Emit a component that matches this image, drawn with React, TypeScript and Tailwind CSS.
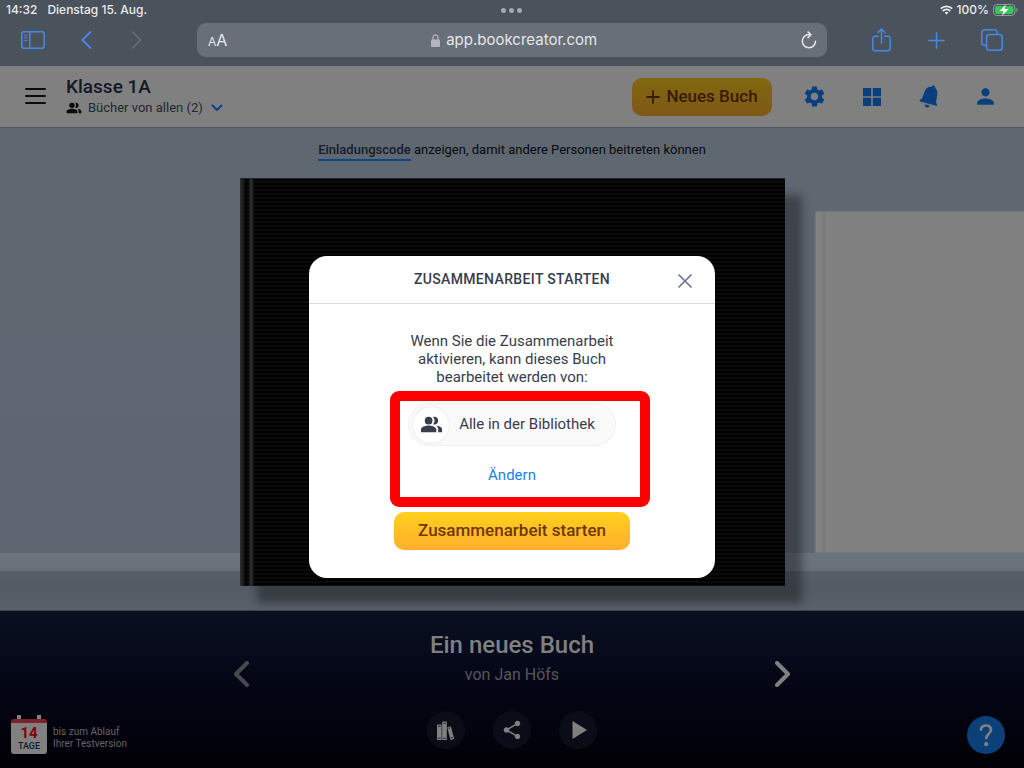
import type { ReactNode } from "react";
import { MdPeopleAlt, MdPerson, MdSettings, MdShare } from "react-icons/md";

function StatusBar() {
  return (
    <div className="grid h-5 grid-cols-3 items-center px-1.5 text-xs leading-4 font-medium text-[#e8eaec]">
      <div className="flex gap-2.5 whitespace-nowrap">
        <span>14:32</span>
        <span>Dienstag 15. Aug.</span>
      </div>
      <div className="flex justify-center gap-[3px]">
        <i className="size-[5px] rounded-full bg-[#a4a9ae]" />
        <i className="size-[5px] rounded-full bg-[#a4a9ae]" />
        <i className="size-[5px] rounded-full bg-[#a4a9ae]" />
      </div>
      <div className="flex items-center justify-end gap-1">
        <svg width="13" height="10" viewBox="0 0 13 10" fill="none" stroke="currentColor" strokeWidth="1.8">
          <path d="M.8 3.7a8.1 8.1 0 0 1 11.4 0M2.8 6a5.2 5.2 0 0 1 7.4 0" />
          <path d="M6.5 9.6 4.6 7.7a2.7 2.7 0 0 1 3.8 0z" fill="currentColor" stroke="none" />
        </svg>
        <span>100%</span>
        <svg width="25" height="12" viewBox="0 0 25 12">
          <rect x=".5" y=".5" width="21.5" height="11" rx="3.4" fill="none" stroke="#949a9f" />
          <rect x="2" y="2" width="18.5" height="8" rx="2" fill="#35c759" />
          <path d="M23.4 4v4c.8-.3 1.2-1.1 1.2-2s-.4-1.7-1.2-2z" fill="#949a9f" />
          <path d="M12.8.4 6.4 6.9h3.9L9.2 11.7 15.5 5h-3.8z" fill="#fff" />
        </svg>
      </div>
    </div>
  );
}

function BrowserBar() {
  return (
    <div className="grid h-[46px] grid-cols-[197px_1fr_197px] items-start pt-[3px] text-[#4689e8]">
      <div className="flex h-[34px] items-center pl-[21px]">
        <button aria-label="Seitenleiste">
          <svg width="24" height="18" viewBox="0 0 24 18" fill="none" stroke="currentColor" strokeWidth="1.5">
            <rect x=".8" y=".8" width="22.4" height="16.4" rx="2.2" />
            <path d="M8.8.8v16.4" />
            <path d="M3 4.2h3.5M3 6.8h3.5M3 9.4h3.5" strokeWidth="1" />
          </svg>
        </button>
        <button aria-label="Zurück" className="ml-9">
          <svg width="11" height="18" viewBox="0 0 11 18" fill="none" stroke="currentColor" strokeWidth="1.8" strokeLinecap="round" strokeLinejoin="round">
            <path d="M9.5 1 1.5 9l8 8" />
          </svg>
        </button>
        <button aria-label="Vorwärts" className="ml-[39px] text-[#6a717a]">
          <svg width="11" height="18" viewBox="0 0 11 18" fill="none" stroke="currentColor" strokeWidth="1.5" strokeLinecap="round" strokeLinejoin="round">
            <path d="m1.5 1 8 8-8 8" />
          </svg>
        </button>
      </div>
      <div className="flex h-[34px] items-center justify-between rounded-[9px] bg-[#686f79] pr-2.5 pl-[11px] text-[#e4e6e8]">
        <button className="flex items-baseline">
          <span className="text-xs">A</span>
          <span className="text-base">A</span>
        </button>
        <div className="flex items-center gap-1.5 text-[15px]">
          <svg width="9" height="13" viewBox="0 0 9 13" className="text-[#b4b5c2]">
            <path d="M2 6V3.6a2.5 2.7 0 0 1 5 0V6" fill="none" stroke="currentColor" strokeWidth="1.2" />
            <rect y="5.5" width="9" height="7.5" rx="1.3" fill="currentColor" />
          </svg>
          <span>app.bookcreator.com</span>
        </div>
        <button aria-label="Neu laden">
          <svg width="16" height="18" viewBox="0 0 16 18" fill="none" stroke="currentColor" strokeWidth="1.5" strokeLinecap="round" strokeLinejoin="round">
            <path d="M14.5 10.2a6.6 6.6 0 1 1-6.6-6.6h1.6" />
            <path d="M7 .9l2.9 2.8L7 6.6" />
          </svg>
        </button>
      </div>
      <div className="flex h-[34px] items-center justify-between pr-[21px] pl-[45px]">
        <button aria-label="Teilen">
          <svg width="19" height="24" viewBox="0 0 19 24" fill="none" stroke="currentColor" strokeWidth="1.5" strokeLinecap="round" strokeLinejoin="round">
            <path d="M6.2 8.3H3a2.2 2.2 0 0 0-2.2 2.2v10A2.2 2.2 0 0 0 3 22.7h13a2.2 2.2 0 0 0 2.2-2.2v-10A2.2 2.2 0 0 0 16 8.3h-3.2" />
            <path d="M9.5 15V1.2M6 4.5 9.5 1 13 4.5" />
          </svg>
        </button>
        <button aria-label="Neuer Tab">
          <svg width="17" height="17" viewBox="0 0 17 17" stroke="currentColor" strokeWidth="1.5" strokeLinecap="round">
            <path d="M8.5.8v15.4M.8 8.5h15.4" />
          </svg>
        </button>
        <button aria-label="Tabs">
          <svg width="22" height="22" viewBox="0 0 22 22" fill="none" stroke="currentColor" strokeWidth="1.5">
            <path d="M5.5 16.2H3.6A2.8 2.8 0 0 1 .8 13.4V3.6A2.8 2.8 0 0 1 3.6.8h9.8a2.8 2.8 0 0 1 2.8 2.8v1.9" />
            <rect x="5.6" y="5.6" width="15.6" height="15.6" rx="2.8" />
          </svg>
        </button>
      </div>
    </div>
  );
}

function NavIcon({ label, children }: { label: string; children: ReactNode }) {
  return (
    <button aria-label={label} className="flex h-10 w-[57px] items-center justify-center">
      {children}
    </button>
  );
}

function Header() {
  return (
    <header className="flex h-[61px] items-center bg-[#808080] pr-2.5 pl-[25px]">
      <button aria-label="Menü" className="flex w-[21px] flex-col gap-[5px] pb-px">
        <i className="h-0.5 rounded-full bg-[#0a0c10]" />
        <i className="h-0.5 rounded-full bg-[#0a0c10]" />
        <i className="h-0.5 rounded-full bg-[#0a0c10]" />
      </button>
      <div className="ml-5">
        <h1 className="text-[19px] leading-[22px] font-medium text-[#141827]">Klasse 1A</h1>
        <button className="flex items-center text-[13px] leading-5 text-[#232733]">
          <MdPeopleAlt className="size-4 text-[#080808]" />
          <span className="ml-1.5">Bücher von allen (2)</span>
          <svg width="12" height="8" viewBox="0 0 12 8" fill="none" stroke="#0a4287" strokeWidth="2" strokeLinecap="round" strokeLinejoin="round" className="ml-2">
            <path d="M1.5 1.5 6 6l4.5-4.5" />
          </svg>
        </button>
      </div>
      <button className="mr-3.5 ml-auto flex h-[38px] w-[140px] items-center justify-center gap-1.5 rounded-[10px] bg-linear-to-b from-[#806810] to-[#805716] text-[17px] font-medium text-[#371c04]">
        <svg width="14" height="14" viewBox="0 0 14 14" stroke="currentColor" strokeWidth="1.8" strokeLinecap="round">
          <path d="M7 1v12M1 7h12" />
        </svg>
        Neues Buch
      </button>
      <nav className="flex text-[#0a3f7e]">
        <NavIcon label="Einstellungen">
          <MdSettings className="size-[25px]" />
        </NavIcon>
        <NavIcon label="Bibliotheken">
          <svg width="18" height="18" viewBox="0 0 18 18" fill="currentColor">
            <path d="M0 0h8.2v8.2H0zM9.8 0H18v8.2H9.8zM0 9.8h8.2V18H0zM9.8 9.8H18V18H9.8z" />
          </svg>
        </NavIcon>
        <NavIcon label="Mitteilungen">
          <svg width="20" height="23" viewBox="0 0 20 23" fill="currentColor">
            <path d="M12.7 1.9c.3-1 1.200-1.500 2.100-1.300 1 .3 1.500 1.200 1.200 2.200 2.100 1.700 2.800 4.300 2.300 7.200l-1.200 6.700c-.1.700 0 1.300.4 1.900l.5.8c.5.800 0 1.500-.8 1.300L1.200 16.400c-.9-.2-1-1.200-.2-1.600l1.100-.6c.6-.3 1-.8 1.200-1.500L5.400 7C6.500 3.500 9.200 1.600 12.700 1.900z" />
            <path d="m5.800 19.300 5 1.300c-.5 1.500-1.700 2.200-3.100 1.900-1.300-.4-2.100-1.700-1.900-3.200z" />
          </svg>
        </NavIcon>
        <NavIcon label="Konto">
          <MdPerson className="size-[25px]" />
        </NavIcon>
      </nav>
    </header>
  );
}

function Shelf() {
  return (
    <main className="flex-1 overflow-hidden border-t border-[#505a69] border-b border-b-[#3c4450] bg-[linear-gradient(to_top,#58606a_0,#535b64_24px,#575f68_39px,#687179_39px,#6b747c_57px,#5e6771_57px,#5f6771_100%)] pb-[23px]">
      <p className="pt-[13px] text-center text-[13px] leading-[18px] text-[#08090b]">
        <a href="#einladung" className="inline-block border-b-2 border-[#0d4687] font-medium text-[#171c2a]">
          Einladungscode
        </a>{" "}
        anzeigen, damit andere Personen beitreten können
      </p>
      <div className="mt-[17px] grid grid-cols-[1fr_545px_1fr] items-center gap-[30px]">
        <div />
        <div className="flex h-[408px] border-t border-[#242424] bg-[repeating-linear-gradient(#010101_0_2px,#0b0b0b_2px_4px)] shadow-[17px_17px_8px_rgba(20,18,22,0.42)]">
          <div className="w-4 bg-[linear-gradient(to_right,#303030_0,#222222_2px,#1a1a1aaa_4px,#00000088_6px,#11111188_9px,#2a2a2a_10px,#2a2a2a_12px,#0a0a0a88_14px,#00000000_16px)]" />
        </div>
        <div className="h-[342px] border border-r-0 border-[#747778] bg-[linear-gradient(to_right,#838383_0,#7f7f7f_6px,#787878_8px,#7c7c7c_9px,#808080_11px)]" />
      </div>
    </main>
  );
}

function RoundButton({ label, children }: { label: string; children: ReactNode }) {
  return (
    <button aria-label={label} className="flex size-[38px] items-center justify-center rounded-full bg-[#0a0d18]">
      {children}
    </button>
  );
}

function TrialBadge() {
  return (
    <div className="flex items-center gap-1.5">
      <div className="w-9">
        <div className="flex h-1 justify-between px-1.5">
          <i className="w-1 bg-[#808080]" />
          <i className="w-1 bg-[#808080]" />
        </div>
        <div className="h-[35px] rounded-[3px] border-t-4 border-[#80202f] bg-[#808080] pt-0.5 text-center">
          <div className="text-[15px] leading-4 font-bold text-[#80000c]">14</div>
          <div className="text-[9px] leading-[10px] font-medium text-[#181c2a]">TAGE</div>
        </div>
      </div>
      <p className="pt-1.5 text-[10px] leading-3 text-[#646568]">
        bis zum Ablauf
        <br />
        Ihrer Testversion
      </p>
    </div>
  );
}

function Footer() {
  return (
    <footer className="bg-linear-to-b from-[#0a1022] to-[#010107] px-[11px] pt-5 pb-3.5 text-[#808080]">
      <div className="flex items-end justify-center">
        <button aria-label="Vorheriges Buch" className="text-[#47494d]">
          <svg width="16" height="26" viewBox="0 0 16 26" fill="none" stroke="currentColor" strokeWidth="4" strokeLinecap="round" strokeLinejoin="round">
            <path d="M14 2 3 13l11 11" />
          </svg>
        </button>
        <div className="w-[526px] text-center">
          <h2 className="text-2xl leading-7 font-medium">Ein neues Buch</h2>
          <p className="mt-1 text-base leading-6 text-[#55565a]">von Jan Höfs</p>
        </div>
        <button aria-label="Nächstes Buch">
          <svg width="16" height="26" viewBox="0 0 16 26" fill="none" stroke="currentColor" strokeWidth="4" strokeLinecap="round" strokeLinejoin="round">
            <path d="m2 2 11 11L2 24" />
          </svg>
        </button>
      </div>
      <div className="mt-6 grid grid-cols-[1fr_auto_1fr]">
        <div className="self-end">
          <TrialBadge />
        </div>
        <div className="flex h-[43px] gap-7">
          <RoundButton label="Bibliothek">
            <svg width="18" height="19" viewBox="0 0 18 19" fill="currentColor">
              <path d="M0 3.5h4.6V19H0zM5.2.5h4.6V19H5.2z" />
              <path d="m10.2 6.2 3.7-.9 3.3 12.6-3.7 1z" />
              <path d="M1 5.2h2.6M1 17.2h2.6M6.2 2.2h2.6M6.2 17.2h2.6M11.4 7.3l2-.5M13.8 17l2-.5" stroke="#0a0d18" strokeWidth=".8" />
            </svg>
          </RoundButton>
          <RoundButton label="Teilen">
            <MdShare className="size-[22px]" />
          </RoundButton>
          <RoundButton label="Abspielen">
            <svg width="18" height="18" viewBox="0 0 18 18" fill="currentColor" className="ml-1">
              <path d="M1.5 0 16 9 1.5 18z" />
            </svg>
          </RoundButton>
        </div>
        <button aria-label="Hilfe" className="mr-2 flex size-[38px] items-center justify-center self-end justify-self-end rounded-full bg-[#0b4079]">
          <svg width="14" height="23" viewBox="0 0 14 23" fill="none" stroke="currentColor" strokeWidth="2.6" strokeLinecap="round">
            <path d="M2 5.6C2.2 3 4.3 1.5 7 1.5c3 0 5 1.7 5 4.3 0 3.9-4.7 4.4-4.7 8.3" />
            <circle cx="7.2" cy="20.2" r="2.1" fill="currentColor" stroke="none" />
          </svg>
        </button>
      </div>
    </footer>
  );
}

function CollaborationDialog() {
  return (
    <div
      role="dialog"
      aria-labelledby="dialog-title"
      className="w-[406px] rounded-[18px] bg-white text-center text-[#383d4d]"
    >
      <div className="relative border-b border-[#d8d9de] pt-3.5 pb-[15px]">
        <h2 id="dialog-title" className="text-sm leading-[18px] font-medium tracking-wide">
          ZUSAMMENARBEIT STARTEN
        </h2>
        <button aria-label="Schließen" className="absolute top-[18px] right-[23px] text-[#6c7494]">
          <svg width="14" height="14" viewBox="0 0 14 14" stroke="currentColor" strokeWidth="1.7" strokeLinecap="round">
            <path d="m1 1 12 12M13 1 1 13" />
          </svg>
        </button>
      </div>
      <div className="mx-auto flex w-[236px] flex-col items-center pt-7 pb-7">
        <p className="w-[220px] text-[15px] leading-[18px]">
          Wenn Sie die Zusammenarbeit aktivieren, kann dieses Buch bearbeitet werden von:
        </p>
        <div className="relative mt-[17px] flex w-full flex-col items-center pb-7">
          <div className="flex h-[43px] items-center gap-2.5 rounded-full border border-[#efeff0] bg-[#fafafa] pr-5 pl-1">
            <span className="flex size-9 items-center justify-center rounded-full bg-white shadow-[0_0_2px_rgba(0,0,0,0.15)]">
              <MdPeopleAlt className="size-[23px]" />
            </span>
            <span className="text-[15px]">Alle in der Bibliothek</span>
          </div>
          <button className="mt-5 text-[15px] leading-[18px] text-[#1a80ee]">Ändern</button>
          {/* highlight around the sharing options */}
          <div className="pointer-events-none absolute -top-3 -right-5 bottom-[5px] -left-1 rounded-[9px] border-10 border-[#fe0000]" />
        </div>
        <button className="h-[38px] w-full rounded-[10px] bg-linear-to-b from-[#ffd01c] to-[#ffae2b] text-[17px] font-medium text-[#6e3804]">
          Zusammenarbeit starten
        </button>
      </div>
    </div>
  );
}

export default function App() {
  return (
    <div className="flex min-h-screen flex-col">
      <div className="bg-[#4a525c] font-[Inter,sans-serif]">
        <StatusBar />
        <BrowserBar />
      </div>
      <div className="relative flex flex-1 flex-col font-[Roboto,sans-serif]">
        <Header />
        <Shelf />
        <Footer />
        <div className="absolute inset-0 flex items-center justify-center">
          <CollaborationDialog />
        </div>
      </div>
    </div>
  );
}
